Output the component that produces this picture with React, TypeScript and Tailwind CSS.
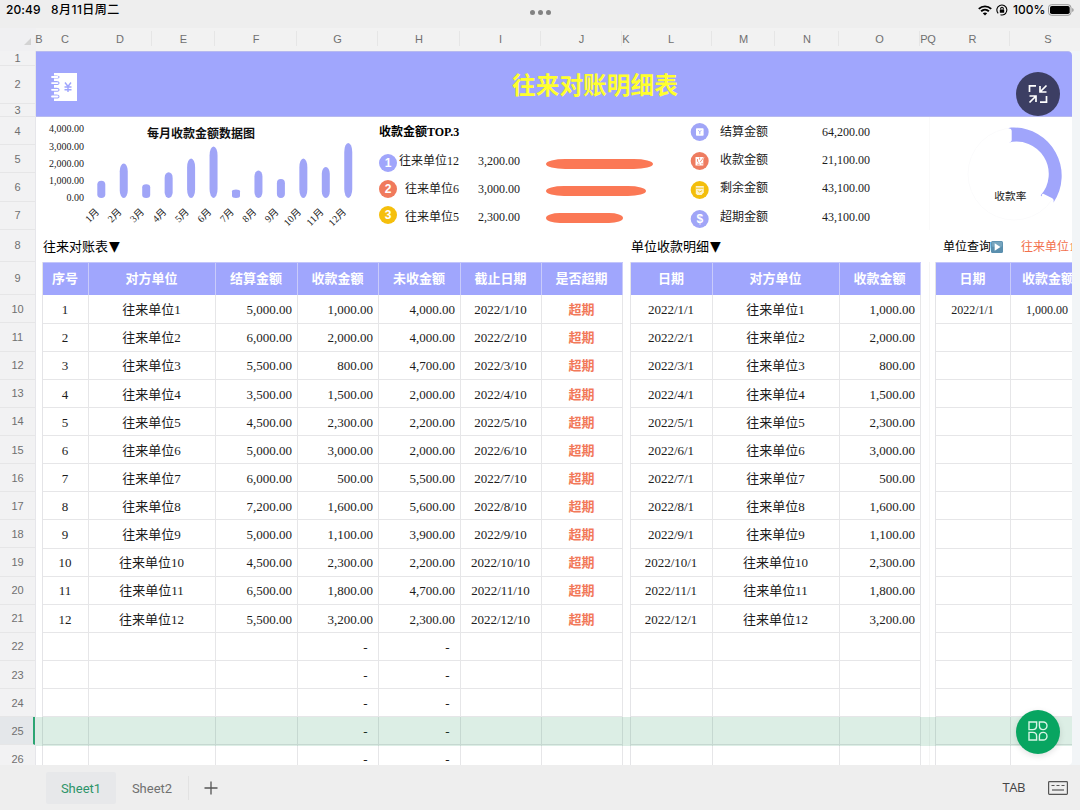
import { Fragment } from "react";
import clsx from "clsx";

const sans = "font-['Liberation_Sans','Noto_Sans_CJK_SC',sans-serif]";
const serif = "font-['Liberation_Serif','Noto_Sans_CJK_SC',serif]";

const sheetColumns = [
  { name: "B", width: 6 },
  { name: "C", width: 46 },
  { name: "D", width: 64 },
  { name: "E", width: 63 },
  { name: "F", width: 82 },
  { name: "G", width: 81 },
  { name: "H", width: 82 },
  { name: "I", width: 81 },
  { name: "J", width: 81 },
  { name: "K", width: 8 },
  { name: "L", width: 82 },
  { name: "M", width: 63 },
  { name: "N", width: 64 },
  { name: "O", width: 81 },
  { name: "P", width: 8 },
  { name: "Q", width: 7 },
  { name: "R", width: 75 },
  { name: "S", width: 76 },
];

// heights of rows 1-9, every later row uses ROW_HEIGHT
const topRows = [14.5, 38, 13.5, 28.2, 28.2, 28.2, 28.4, 32, 33.4];
const ROW_HEIGHT = 28.14;
const SELECTED_ROW = 25;
const ROW_COUNT = 17;

const records = [
  { total: "5,000.00", paid: "1,000.00", left: "4,000.00" },
  { total: "6,000.00", paid: "2,000.00", left: "4,000.00" },
  { total: "5,500.00", paid: "800.00", left: "4,700.00" },
  { total: "3,500.00", paid: "1,500.00", left: "2,000.00" },
  { total: "4,500.00", paid: "2,300.00", left: "2,200.00" },
  { total: "5,000.00", paid: "3,000.00", left: "2,000.00" },
  { total: "6,000.00", paid: "500.00", left: "5,500.00" },
  { total: "7,200.00", paid: "1,600.00", left: "5,600.00" },
  { total: "5,000.00", paid: "1,100.00", left: "3,900.00" },
  { total: "4,500.00", paid: "2,300.00", left: "2,200.00" },
  { total: "6,500.00", paid: "1,800.00", left: "4,700.00" },
  { total: "5,500.00", paid: "3,200.00", left: "2,300.00" },
];

const monthly = [1000, 2000, 800, 1500, 2300, 3000, 500, 1600, 1100, 2300, 1800, 3200];

const topThree = [
  { name: "往来单位12", value: "3,200.00", bar: 107, color: "bg-[#a0a5fb]" },
  { name: "往来单位6", value: "3,000.00", bar: 100, color: "bg-[#f07a5c]" },
  { name: "往来单位5", value: "2,300.00", bar: 77, color: "bg-[#f5bf0c]" },
];

const stats = [
  { label: "结算金额", value: "64,200.00" },
  { label: "收款金额", value: "21,100.00" },
  { label: "剩余金额", value: "43,100.00" },
  { label: "超期金额", value: "43,100.00" },
];

type Column = {
  title: string;
  width: number;
  align?: "center" | "right";
  className?: string;
};

type TableProps = {
  columns: Column[];
  rows: string[][];
  className?: string;
};

function DataTable({ columns, rows, className }: TableProps) {
  return (
    <div className={clsx("shrink-0 border-l border-[#e4e4e7]", className)}>
      <div className="flex h-[33.4px] border-t border-[#c3c6fb] bg-[#a0a6fd]">
        {columns.map((col) => (
          <div
            key={col.title}
            style={{ width: col.width }}
            className="flex shrink-0 items-center justify-center border-r border-[#c9cbfa] text-[13px] font-bold whitespace-nowrap text-white"
          >
            {col.title}
          </div>
        ))}
      </div>
      {rows.map((row, i) => (
        <div key={i} className="flex" style={{ height: ROW_HEIGHT }}>
          {columns.map((col, c) => (
            <div
              key={col.title}
              style={{ width: col.width }}
              className={clsx(
                "flex shrink-0 items-center border-r border-b border-[#e6e6e8] pt-[1.5px] leading-none whitespace-nowrap",
                col.align === "right" ? "justify-end pr-[4.5px]" : "justify-center",
                row[c] === "-" && "pr-[10px]",
                col.className
              )}
            >
              {row[c]}
            </div>
          ))}
        </div>
      ))}
    </div>
  );
}

function MonthlyChart() {
  return (
    <svg width="336" height="113" viewBox="36 117 336 113" className="shrink-0">
      {["4,000.00", "3,000.00", "2,000.00", "1,000.00", "0.00"].map((label, i) => (
        <text key={label} x="84" y={132.3 + i * 17.2} textAnchor="end" fontSize="10" fill="#222">
          {label}
        </text>
      ))}
      <text x="147" y="138" fontSize="12" fontWeight="bold" fill="#111">
        每月收款金额数据图
      </text>
      {monthly.map((value, i) => {
        const x = 101.3 + i * 22.45;
        const h = value * 0.0172;
        return (
          <Fragment key={i}>
            <rect x={x - 4} y={198 - h} width="8" height={h} rx="4" ry={Math.min(h * 0.22, 9)} fill="#a0a5f7" />
            <text
              transform={`translate(${x - 1.5} 212.5) rotate(-45)`}
              textAnchor="end"
              fontSize="10"
              fill="#222"
            >
              {i + 1}月
            </text>
          </Fragment>
        );
      })}
    </svg>
  );
}

function StatIcons() {
  return (
    <svg width="20" height="113" viewBox="690 117 20 113" className="shrink-0">
      <circle cx="699.7" cy="132" r="9" fill="#a0a5f7" />
      <rect x="696" y="128.3" width="7.6" height="7.4" rx="0.8" fill="#fff" />
      <path d="M698.3 130.2l1.5 1.7 1.5-1.7M699.8 132v2.2" stroke="#a0a5f7" strokeWidth="0.9" fill="none" />

      <circle cx="699.7" cy="161" r="9" fill="#ee7c60" />
      <path d="M695.5 157h6.8l2.2 0.4-1.2 2v6.2h-7.8z" fill="#fff" />
      <path d="M697.5 159v2.5l1.3 1M697.3 164.2h2.4M703.8 157.4l-3.6 4.7M701.3 163.8h1.6M699.6 157.6v2" stroke="#ee7c60" strokeWidth="0.8" fill="none" />

      <circle cx="699.7" cy="190" r="9" fill="#f3be0c" />
      <path d="M695.8 186h8v6.2l-2.2 2.8h-4.4l-1.4-1.4z" fill="#fdf3cd" />
      <path d="M696 188.2h7.5M697.7 190.6l2 1.4 2.4-1.4" stroke="#f3be0c" strokeWidth="0.9" fill="none" />

      <circle cx="699.7" cy="219" r="9" fill="#a0a5f7" />
      <text x="699.8" y="223.2" textAnchor="middle" fontSize="12" fontWeight="bold" fill="#fff" className={sans}>
        $
      </text>
    </svg>
  );
}

function RateDonut() {
  return (
    <svg width="137" height="113" viewBox="935 117 137 113" className="shrink-0">
      <circle cx="1014" cy="174" r="46" fill="none" stroke="#fbfbfc" strokeWidth="1" />
      <path
        d="M1008.3 128.3Q1010 127.200 1012.500 127.500A48.200 48.200 0 0 1 1053.400 202.700Q1054.300 199.300 1052.300 198.300L1043.300 193.700Q1041.700 193.300 1041.800 196.500L1040.700 195.300A32.300 32.300 0 0 0 1008.300 142.700Q1011.700 142 1011.700 140V131Q1011.700 128.600 1008.300 128.300Z"
        fill="#a0a5fb"
      />
      <text x="994.3" y="200" fontSize="10.7" fill="#222">
        收款率
      </text>
    </svg>
  );
}

function StatusBar() {
  return (
    <div className="flex h-7 shrink-0 items-start justify-between bg-[#eeeeee] px-[6px] font-['Inter','Noto_Sans_CJK_SC',sans-serif] text-[12px] leading-[20px] font-medium text-black">
      <div className="flex w-[200px] gap-[10px]">
        <span className="w-[35px] tracking-[0.1px]">20:49</span>
        <span className="tracking-[0.45px] whitespace-nowrap">8月11日周二</span>
      </div>
      <div className="flex gap-[3px] pt-[10px]">
        <i className="size-[5px] rounded-full bg-[#828282]" />
        <i className="size-[5px] rounded-full bg-[#828282]" />
        <i className="size-[5px] rounded-full bg-[#828282]" />
      </div>
      <div className="flex w-[200px] items-center justify-end">
        <svg width="14" height="11" viewBox="0 0 14 11" fill="none" stroke="#000" strokeWidth="1.9">
          <path d="M0.8 3.9C4.3 0.5 9.7 0.5 13.2 3.9" />
          <path d="M3.1 6.3C5.3 4.2 8.7 4.2 10.9 6.3" />
          <path d="M7 10.5L4.8 8.3C6 7.1 8 7.1 9.2 8.3Z" fill="#000" stroke="none" />
        </svg>
        <svg width="12" height="12" viewBox="0 0 12 12" className="ml-[4px]" fill="none" stroke="#000" strokeWidth="1.1">
          <path d="M2.2 9.4A5 5 0 1 1 4.5 10.8M10 9.2A5 5 0 0 1 5.8 11" />
          <rect x="3.8" y="5.4" width="4.4" height="3.3" rx="0.5" fill="#000" stroke="none" />
          <path d="M4.7 5.6V4.6a1.3 1.3 0 0 1 2.6 0V5.6" />
        </svg>
        <span className="mr-[3px] ml-[5px] w-[32px] whitespace-nowrap">100%</span>
        <svg width="26" height="12" viewBox="0 0 26 12">
          <rect x="0.5" y="0.7" width="22.5" height="10.6" rx="3" fill="none" stroke="#999" />
          <rect x="2" y="2" width="19.7" height="8" rx="1.8" />
          <path d="M24.2 4v4q1.5-0.600 1.5-2t-1.5-2" fill="#999" />
        </svg>
      </div>
    </div>
  );
}

function ColumnHeader() {
  return (
    <div className="flex h-[23px] shrink-0 overflow-hidden bg-[#f2f2f2] text-[11px] text-[#707070]">
      <div className="flex w-9 shrink-0 items-end justify-end bg-[#f0f0f2] pr-[5px] pb-[6px]">
        <svg width="7" height="7" viewBox="0 0 7 7">
          <path d="M7 0V7H0Z" fill="#d3d3d3" />
        </svg>
      </div>
      {sheetColumns.map((col) => (
        <div key={col.name} style={{ width: col.width }} className="relative flex shrink-0 items-center justify-center">
          <span>{col.name}</span>
          {col.width > 50 && <i className="absolute top-[3px] right-0 h-[15px] w-px bg-[#e6e6e6]" />}
        </div>
      ))}
    </div>
  );
}

function RowHeader() {
  const heights = [...topRows, ...Array.from({ length: ROW_COUNT }, () => ROW_HEIGHT)];
  return (
    <div className="w-9 shrink-0 overflow-hidden border-r border-[#e6e6ea] bg-[#f2f2f3] text-[11px] text-[#707070]">
      {heights.map((height, i) => (
        <div
          key={i}
          style={{ height }}
          className={clsx(
            "flex items-center justify-center border-b border-[#e6e6e7] pt-px leading-none",
            i + 1 === SELECTED_ROW && "border-r-2 border-r-[#2ca673] bg-[#e4e7ea] pl-[2px]"
          )}
        >
          {i + 1}
        </div>
      ))}
    </div>
  );
}

function Banner() {
  return (
    <div className="flex h-[66px] items-center rounded-tr-[4px] border-t border-b border-[#b7baf0] bg-[#a0a6fd]">
      <svg width="28" height="30" viewBox="0 0 28 30" className="ml-[15px] shrink-0 translate-y-[3px]">
        <path d="M3 1H26V29H3V26.5H5.5Q8.500 26.5 8.500 24.5T5.5 22.5H3V19.8H5.5Q8.500 19.8 8.500 17.8T5.5 15.8H3V13.1H5.5Q8.500 13.1 8.500 11.1T5.5 9.1H3V6.5H5.5Q8.500 6.5 8.500 5T5.5 3.5H3Z" fill="#fff" />
        <path d="M1 5H6.5M1 11.1H6.5M1 17.8H6.5M1 24.5H6.5" stroke="#fff" strokeWidth="1.8" strokeLinecap="round" />
        <path d="M14 10.5L17 14.5L20 10.5M17 14.5V20M13.5 15H20.5M13.5 17.7H20.5" stroke="#a0a6fd" strokeWidth="1.4" fill="none" />
      </svg>
      <h1 className="ml-[433px] pt-[5px] text-[23.7px] leading-none font-bold text-[#ffff2e]">往来对账明细表</h1>
    </div>
  );
}

function Dashboard() {
  return (
    <div className={clsx("flex h-[113px] text-[12px] leading-none text-[#1c1c1c]", serif)}>
      <MonthlyChart />

      <div className="w-[148px] shrink-0 pl-[7px]">
        <div className="flex h-[28.2px] items-center pt-[2px] font-bold text-black">收款金额TOP.3</div>
        <div className="flex">
          <div className="flex w-[18px] flex-col gap-[8.2px] pt-[8.5px]">
            {topThree.map((item, i) => (
              <div
                key={item.name}
                className={clsx("flex size-[18px] items-center justify-center rounded-full text-[12px] font-bold text-white", item.color, sans)}
              >
                {i + 1}
              </div>
            ))}
          </div>
          <div className="flex-1 pt-[1.5px]">
            {topThree.map((item) => (
              <div key={item.name} className="flex h-[28.2px] items-center whitespace-nowrap">
                <span className="w-[62px] text-right">{item.name}</span>
                <span className="w-[61px] text-right">{item.value}</span>
              </div>
            ))}
          </div>
        </div>
      </div>

      <div className="flex w-[170px] shrink-0 flex-col gap-[17px] pt-[41.5px] pl-[26px]">
        {topThree.map((item) => (
          <div key={item.name} style={{ width: item.bar }} className="h-[10px] rounded-[18%/50%] bg-[#fb7855]" />
        ))}
      </div>

      <StatIcons />
      <div className="w-[220px] shrink-0 border-r border-[#fafafa] pt-px pl-[10px]">
        {stats.map((stat) => (
          <div key={stat.label} className="flex h-[28.2px] items-center">
            <span className="w-[72px]">{stat.label}</span>
            <span className="w-[78px] text-right">{stat.value}</span>
          </div>
        ))}
      </div>
      <div className="w-[5px] shrink-0" />
      <RateDonut />
    </div>
  );
}

function SectionTitles() {
  return (
    <div className="flex h-8 items-center leading-none whitespace-nowrap text-black">
      <div className="flex w-[588px] shrink-0 items-center pl-[7px]">
        往来对账表<span className="ml-px font-['DejaVu_Sans',sans-serif] text-[14px]">▼</span>
      </div>
      <div className="flex w-[311px] shrink-0 items-center pl-[7px]">
        单位收款明细<span className="ml-px font-['DejaVu_Sans',sans-serif] text-[14px]">▼</span>
      </div>
      <div className="flex w-[86px] shrink-0 items-center pt-px pl-[8px] text-[12px]">
        单位查询
        <svg width="12" height="12" viewBox="0 0 12 12" className="shrink-0">
          <rect width="12" height="12" rx="1.5" fill="#5a8fae" />
          <rect x="0.8" y="0.8" width="10.4" height="5" rx="1" fill="#76a5be" />
          <path d="M3.7 2.3L9.5 6L3.7 9.7Z" fill="#fff" />
        </svg>
      </div>
      <div className="shrink-0 pt-px text-[12px] text-[#f2704d]">往来单位1</div>
    </div>
  );
}

function Tables() {
  const blanks = ROW_COUNT - records.length;
  const ledger = [
    ...records.map((r, i) => [`${i + 1}`, `往来单位${i + 1}`, r.total, r.paid, r.left, `2022/${i + 1}/10`, "超期"]),
    ...Array.from({ length: blanks }, () => ["", "", "", "-", "-", "", ""]),
  ];
  const receipts = [
    ...records.map((r, i) => [`2022/${i + 1}/1`, `往来单位${i + 1}`, r.paid]),
    ...Array.from({ length: blanks }, () => ["", "", ""]),
  ];
  const query = [["2022/1/1", "1,000.00"], ...Array.from({ length: ROW_COUNT - 1 }, () => ["", ""])];

  return (
    <div className="flex pl-[5.5px]">
      <DataTable
        rows={ledger}
        columns={[
          { title: "序号", width: 46 },
          { title: "对方单位", width: 127 },
          { title: "结算金额", width: 82, align: "right" },
          { title: "收款金额", width: 81, align: "right" },
          { title: "未收金额", width: 82, align: "right" },
          { title: "截止日期", width: 81 },
          { title: "是否超期", width: 81, className: "font-bold text-[#f2795a]" },
        ]}
      />
      <DataTable
        className="ml-[7px]"
        rows={receipts}
        columns={[
          { title: "日期", width: 82 },
          { title: "对方单位", width: 127 },
          { title: "收款金额", width: 81, align: "right" },
        ]}
      />
      <div className="ml-[8px] w-px shrink-0 bg-[#f5f5f5]" />
      <DataTable
        className="ml-[5px] text-[12px]"
        rows={query}
        columns={[
          { title: "日期", width: 75 },
          { title: "收款金额", width: 76, align: "right", className: "pr-[17.5px]!" },
        ]}
      />
    </div>
  );
}

function Footer() {
  return (
    <div className="flex h-[45px] shrink-0 items-center bg-[#eeeeee] pl-[46px] font-[Roboto,sans-serif] text-[13px] text-[#707070]">
      <div className="flex h-8 w-[70px] items-center justify-center rounded-[2px] bg-[#e7e8ea] pt-[2px] text-[#2d9469]">Sheet1</div>
      <div className="flex h-6 w-[73px] items-center justify-center border-r border-[#e2e2e2] pt-[2px]">Sheet2</div>
      <svg width="14" height="14" viewBox="0 0 14 14" className="ml-[15px]" stroke="#555" strokeWidth="1.3">
        <path d="M7 0.5V13.5M0.5 7H13.5" />
      </svg>
      <div className="mr-[23px] ml-auto pt-px font-['Open_Sans',sans-serif] tracking-[-0.4px] text-[#444]">TAB</div>
      <svg width="20" height="14" viewBox="0 0 20 14" className="mr-[12px]" fill="none" stroke="#555" strokeWidth="1.2">
        <rect x="0.6" y="0.6" width="18.8" height="12.8" rx="0.8" />
        <path d="M3.5 4.5H16.5" strokeDasharray="3 2" />
        <path d="M4 9H16" />
      </svg>
    </div>
  );
}

export default function App() {
  return (
    <div className={clsx("relative flex h-[810px] w-[1080px] flex-col overflow-hidden bg-[#eeeeee]", sans)}>
      <StatusBar />
      <ColumnHeader />
      <div className="flex min-h-0 flex-1 bg-[#f2f5f7]">
        <RowHeader />
        <div className={clsx("relative w-[1036px] shrink-0 overflow-hidden rounded-r-[4px] bg-white text-[13px] text-[#1c1c1c]", serif)}>
          <Banner />
          <Dashboard />
          <SectionTitles />
          <Tables />
          {/* selected row tint */}
          <div className="pointer-events-none absolute inset-x-0 top-[666px] h-[29px] bg-[#158a50]/15" />
        </div>
      </div>
      <Footer />

      {/* floating buttons */}
      <button className="absolute top-[72px] right-5 flex size-11 items-center justify-center rounded-full bg-[#3c3e63]">
        <svg width="20" height="20" viewBox="0 0 20 20" fill="none" stroke="#fff" strokeWidth="1.7">
          <path d="M1.5 8V1.8H8" />
          <path d="M18.5 12V18.2H12" />
          <path d="M18.5 1.5L12.5 7.5M12 2V8H18.5" />
          <path d="M1.5 18.5L7.5 12.5M8 18V12H1.5" />
        </svg>
      </button>
      <button className="absolute top-[710px] right-5 flex size-11 items-center justify-center rounded-full bg-[#08a561] shadow-[0_2px_6px_rgba(0,0,0,0.12)]">
        <svg width="20" height="20" viewBox="0 0 20 20" fill="none" stroke="#d8f5e6" strokeWidth="1.4" className="-translate-y-px">
          <path d="M1 1H8.6V4.8Q8.6 8.6 4.8 8.6H1Z" />
          <path d="M11.4 1H15.2A3.8 3.8 0 0 1 15.2 8.6Q11.4 8.6 11.4 4.8Z" />
          <path d="M1 11.4H4.8Q8.6 11.4 8.6 15.2V19H1Z" />
          <path d="M15.2 11.4A3.8 3.8 0 0 1 15.2 19H11.4V15.2Q11.4 11.4 15.2 11.4Z" />
        </svg>
      </button>
    </div>
  );
}
